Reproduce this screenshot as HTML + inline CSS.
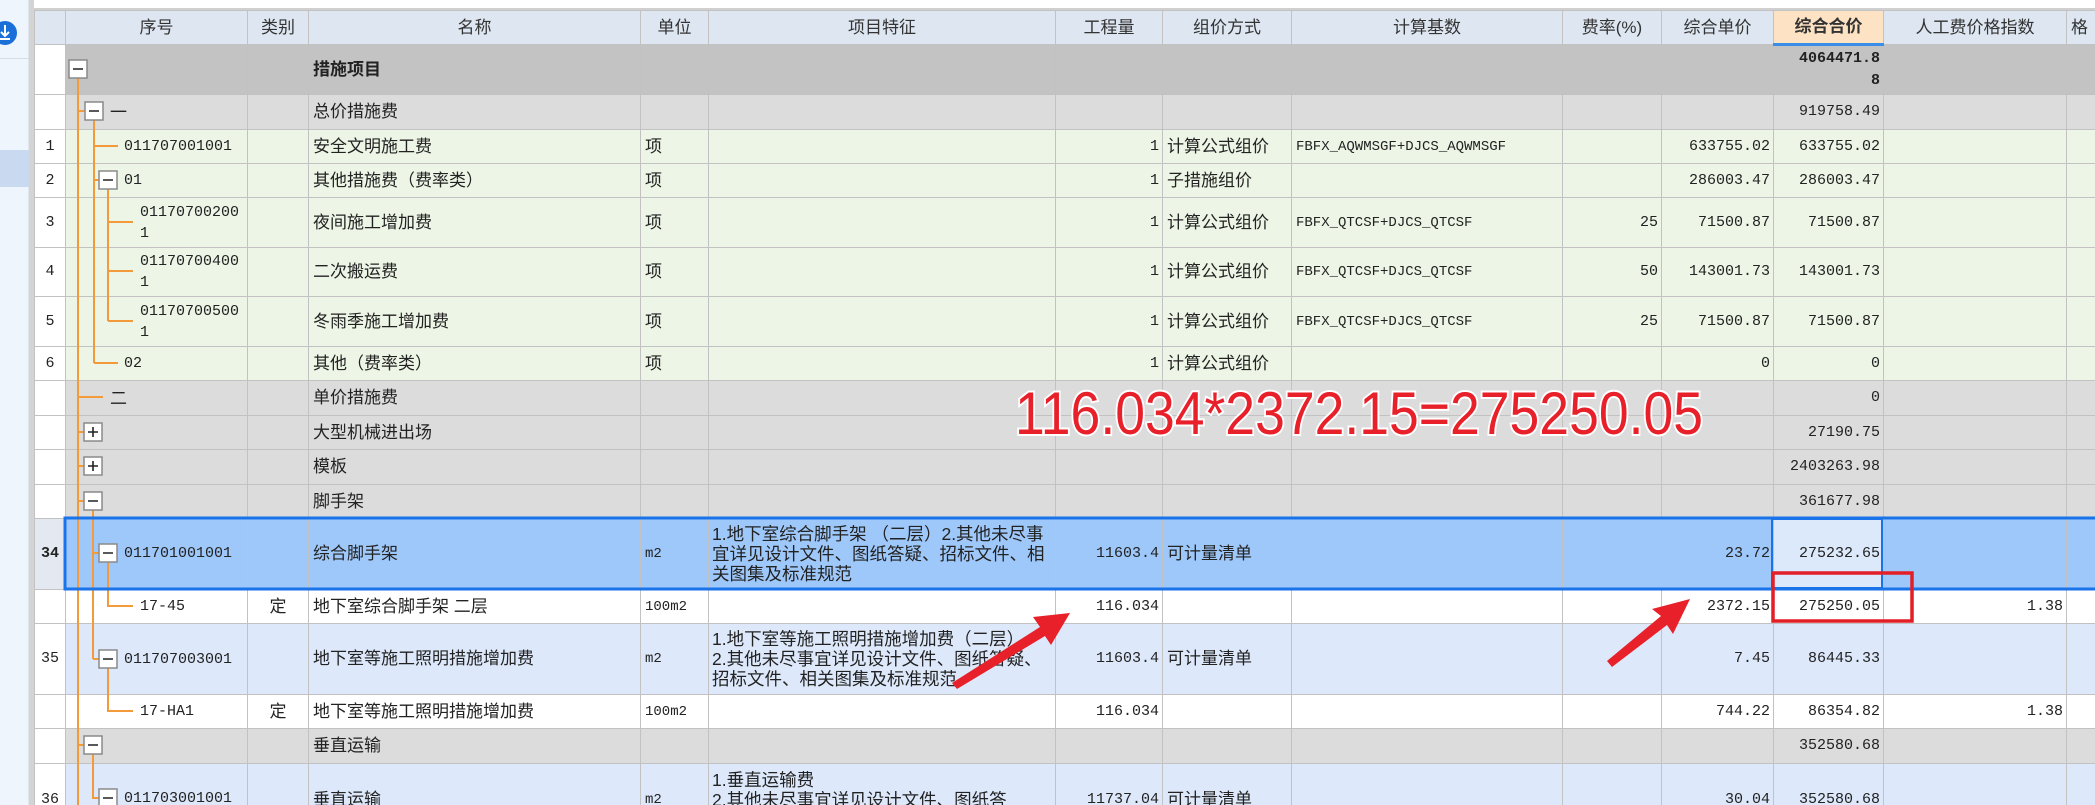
<!DOCTYPE html>
<html style="width:2095px;height:805px;overflow:hidden"><head><meta charset="utf-8">
<style>
*{margin:0;padding:0;box-sizing:border-box}
body{width:2095px;height:805px;overflow:hidden;background:#fff;position:relative;font-family:"Liberation Sans","Noto Sans CJK SC",sans-serif;color:#222}
#side{position:absolute;left:0;top:0;width:29px;height:805px;background:#eef5fc;border-right:1px solid #dfe6ee}
#gut{position:absolute;left:29px;top:0;width:5px;height:805px;background:#d4d4d4}
#topstrip{position:absolute;left:34px;top:0;width:2061px;height:10px;background:#fff;border-bottom:2px solid #d0d0d0}
table{position:absolute;left:34px;top:10px;border-collapse:collapse;table-layout:fixed;width:2100px}
td{border:1px solid #c2c2c2;font-size:17px;padding:0 4px;overflow:hidden;white-space:nowrap;vertical-align:middle;font-family:"Liberation Sans","Noto Sans CJK SC",sans-serif;line-height:20px}
tr.h td{background:#dde6f1;text-align:center;color:#333;height:34px}
td.n{text-align:right;font-family:"Liberation Mono","Noto Sans CJK SC",monospace;font-size:15px;padding-right:3px}
td.m{font-family:"Liberation Mono",monospace;font-size:14px}
td.rn{background:#fff;text-align:center;font-family:"Liberation Mono",monospace;font-size:15px;padding:0}
tr.g0 td{background:#c3c3c3}
tr.g1 td{background:#dcdcdc}
tr.gr td{background:#edf6e6}
tr.sel td{background:#9fc8fa}
tr.lb td{background:#dde9fb}
tr.w td{background:#fff}
tr td.rn{background:#fff}
td.f{white-space:normal;font-size:17.5px;line-height:20px;padding:0 3px;word-break:break-all}
.t{position:absolute;font-family:"Liberation Mono",monospace;font-size:15px;line-height:20px;height:20px}
</style></head><body>
<div id="side">
<svg width="29" height="805" style="position:absolute;left:0;top:0">
<rect x="0" y="58" width="29" height="1" fill="#d6dde6"/>
<rect x="0" y="150" width="29" height="37" fill="#c9d9f0"/>
<circle cx="5" cy="33" r="12" fill="#1a6fd8"/>
<path d="M5 25v11M1 32l4 4 4-4M0 39h10" stroke="#fff" stroke-width="2" fill="none"/>
</svg>
</div>
<div id="gut"></div>
<div id="topstrip"></div>
<table>
<colgroup><col style="width:31px"><col style="width:182px"><col style="width:61px"><col style="width:332px"><col style="width:68px"><col style="width:347px"><col style="width:107px"><col style="width:129px"><col style="width:271px"><col style="width:99px"><col style="width:112px"><col style="width:110px"><col style="width:183px"><col style="width:68px"></colgroup>
<tr class="h"><td></td><td>序号</td><td>类别</td><td>名称</td><td>单位</td><td>项目特征</td><td>工程量</td><td>组价方式</td><td>计算基数</td><td>费率(%)</td><td>综合单价</td><td style="background:#fde3c4;font-weight:bold;border-bottom:3px solid #3b8ee8">综合合价</td><td>人工费价格指数</td><td style="text-align:left">格</td></tr>
<tr class="g0" style="height:50px"><td class="rn"></td><td></td><td></td><td style="font-weight:bold">措施项目</td><td></td><td></td><td></td><td></td><td></td><td></td><td></td><td class="n" style="font-weight:bold;line-height:22px;white-space:normal">4064471.8<br>8</td><td></td><td></td></tr>
<tr class="g1" style="height:35px"><td class="rn"></td><td></td><td></td><td>总价措施费</td><td></td><td></td><td></td><td></td><td></td><td></td><td></td><td class="n">919758.49</td><td></td><td></td></tr>
<tr class="gr" style="height:34px"><td class="rn">1</td><td></td><td></td><td>安全文明施工费</td><td>项</td><td></td><td class="n">1</td><td>计算公式组价</td><td class="m">FBFX_AQWMSGF+DJCS_AQWMSGF</td><td></td><td class="n">633755.02</td><td class="n">633755.02</td><td></td><td></td></tr>
<tr class="gr" style="height:34px"><td class="rn">2</td><td></td><td></td><td>其他措施费（费率类）</td><td>项</td><td></td><td class="n">1</td><td>子措施组价</td><td></td><td></td><td class="n">286003.47</td><td class="n">286003.47</td><td></td><td></td></tr>
<tr class="gr" style="height:50px"><td class="rn">3</td><td></td><td></td><td>夜间施工增加费</td><td>项</td><td></td><td class="n">1</td><td>计算公式组价</td><td class="m">FBFX_QTCSF+DJCS_QTCSF</td><td class="n">25</td><td class="n">71500.87</td><td class="n">71500.87</td><td></td><td></td></tr>
<tr class="gr" style="height:49px"><td class="rn">4</td><td></td><td></td><td>二次搬运费</td><td>项</td><td></td><td class="n">1</td><td>计算公式组价</td><td class="m">FBFX_QTCSF+DJCS_QTCSF</td><td class="n">50</td><td class="n">143001.73</td><td class="n">143001.73</td><td></td><td></td></tr>
<tr class="gr" style="height:50px"><td class="rn">5</td><td></td><td></td><td>冬雨季施工增加费</td><td>项</td><td></td><td class="n">1</td><td>计算公式组价</td><td class="m">FBFX_QTCSF+DJCS_QTCSF</td><td class="n">25</td><td class="n">71500.87</td><td class="n">71500.87</td><td></td><td></td></tr>
<tr class="gr" style="height:34px"><td class="rn">6</td><td></td><td></td><td>其他（费率类）</td><td>项</td><td></td><td class="n">1</td><td>计算公式组价</td><td></td><td></td><td class="n">0</td><td class="n">0</td><td></td><td></td></tr>
<tr class="g1" style="height:35px"><td class="rn"></td><td></td><td></td><td>单价措施费</td><td></td><td></td><td></td><td></td><td></td><td></td><td></td><td class="n">0</td><td></td><td></td></tr>
<tr class="g1" style="height:34px"><td class="rn"></td><td></td><td></td><td>大型机械进出场</td><td></td><td></td><td></td><td></td><td></td><td></td><td></td><td class="n">27190.75</td><td></td><td></td></tr>
<tr class="g1" style="height:35px"><td class="rn"></td><td></td><td></td><td>模板</td><td></td><td></td><td></td><td></td><td></td><td></td><td></td><td class="n">2403263.98</td><td></td><td></td></tr>
<tr class="g1" style="height:34px"><td class="rn"></td><td></td><td></td><td>脚手架</td><td></td><td></td><td></td><td></td><td></td><td></td><td></td><td class="n">361677.98</td><td></td><td></td></tr>
<tr class="sel" style="height:71px"><td class="rn" style="background:#e4e8f0;font-weight:bold">34</td><td></td><td></td><td>综合脚手架</td><td class="m">m2</td><td class="f">1.地下室综合脚手架 （二层）2.其他未尽事宜详见设计文件、图纸答疑、招标文件、相关图集及标准规范</td><td class="n">11603.4</td><td>可计量清单</td><td></td><td></td><td class="n">23.72</td><td class="n" style="background:#dce9fb">275232.65</td><td></td><td></td></tr>
<tr class="w" style="height:34px"><td class="rn"></td><td></td><td style="text-align:center">定</td><td>地下室综合脚手架 二层</td><td class="m">100m2</td><td></td><td class="n">116.034</td><td></td><td></td><td></td><td class="n">2372.15</td><td class="n">275250.05</td><td class="n">1.38</td><td></td></tr>
<tr class="lb" style="height:71px"><td class="rn">35</td><td></td><td></td><td>地下室等施工照明措施增加费</td><td class="m">m2</td><td class="f">1.地下室等施工照明措施增加费（二层）<br>2.其他未尽事宜详见设计文件、图纸答疑、招标文件、相关图集及标准规范</td><td class="n">11603.4</td><td>可计量清单</td><td></td><td></td><td class="n">7.45</td><td class="n">86445.33</td><td></td><td></td></tr>
<tr class="w" style="height:34px"><td class="rn"></td><td></td><td style="text-align:center">定</td><td>地下室等施工照明措施增加费</td><td class="m">100m2</td><td></td><td class="n">116.034</td><td></td><td></td><td></td><td class="n">744.22</td><td class="n">86354.82</td><td class="n">1.38</td><td></td></tr>
<tr class="g1" style="height:35px"><td class="rn"></td><td></td><td></td><td>垂直运输</td><td></td><td></td><td></td><td></td><td></td><td></td><td></td><td class="n">352580.68</td><td></td><td></td></tr>
<tr class="lb" style="height:72px"><td class="rn">36</td><td></td><td></td><td>垂直运输</td><td class="m">m2</td><td class="f">1.垂直运输费<br>2.其他未尽事宜详见设计文件、图纸答<br>疑、招标文件</td><td class="n">11737.04</td><td>可计量清单</td><td></td><td></td><td class="n">30.04</td><td class="n">352580.68</td><td></td><td></td></tr>
</table>

<svg width="2095" height="805" style="position:absolute;left:0;top:0">
<g stroke="#f39a3a" stroke-width="2" fill="none">
<path d="M78 77V805M78 111H86M78 432H86M78 466H86M78 501H86M78 745H86M78 397H103"/>
<path d="M94 119V363M94 146H118M94 180H100M94 363H118"/>
<path d="M108 189V321M108 222H133M108 271H133M108 321H133"/>
<path d="M93 510V659M93 553H100M93 659H100"/>
<path d="M108 562V606H133M108 668V711H133"/>
<path d="M93 754V798H100"/>
</g>
<g fill="#fff" stroke="#8a8a8a" stroke-width="1.5">
<rect x="69" y="60" width="18" height="18"/>
<rect x="85" y="102" width="18" height="18"/>
<rect x="99" y="171" width="18" height="18"/>
<rect x="84" y="423" width="18" height="18"/>
<rect x="84" y="457" width="18" height="18"/>
<rect x="84" y="492" width="18" height="18"/>
<rect x="99" y="544" width="18" height="18"/>
<rect x="99" y="650" width="18" height="18"/>
<rect x="84" y="736" width="18" height="18"/>
<rect x="99" y="789" width="18" height="18"/>
</g>
<g stroke="#222" stroke-width="1.6">
<path d="M73 69h10M89 111h10M103 180h10M88 432h10M93 427v10M88 466h10M93 461v10M88 501h10M103 553h10M103 659h10M88 745h10M103 798h10"/>
</g>
<rect x="65" y="518" width="2040" height="71" fill="none" stroke="#1a73e8" stroke-width="3"/>
<rect x="1772" y="519" width="110" height="69" fill="none" stroke="#1a73e8" stroke-width="2"/>
<rect x="1773" y="573" width="139" height="48" fill="none" stroke="#e21f26" stroke-width="3.5"/>
<text x="1015" y="434" font-family="Liberation Sans Narrow,Liberation Sans,sans-serif" font-size="60" fill="#e8202a" stroke="#fff" stroke-width="4" paint-order="stroke" textLength="688" lengthAdjust="spacingAndGlyphs">116.034*2372.15=275250.05</text>
<polygon points="952,683 1040,627 1033,617 1070,613 1051,645 1045,636 957,689" fill="#e8202a"/>
<polygon points="1607,661 1661,616 1652,609 1690,599 1673,634 1667,625 1612,667" fill="#e8202a"/>
</svg>

<div class="t" style="left:110px;top:101px;font-family:'Noto Sans CJK SC',sans-serif;font-size:17px">一</div>
<div class="t" style="left:124px;top:137px">011707001001</div>
<div class="t" style="left:124px;top:171px">01</div>
<div class="t" style="left:140px;top:202px;line-height:21px;height:42px">01170700200<br>1</div>
<div class="t" style="left:140px;top:251px;line-height:21px;height:42px">01170700400<br>1</div>
<div class="t" style="left:140px;top:301px;line-height:21px;height:42px">01170700500<br>1</div>
<div class="t" style="left:124px;top:354px">02</div>
<div class="t" style="left:110px;top:387px;font-family:'Noto Sans CJK SC',sans-serif;font-size:17px">二</div>
<div class="t" style="left:124px;top:544px">011701001001</div>
<div class="t" style="left:140px;top:597px">17-45</div>
<div class="t" style="left:124px;top:650px">011707003001</div>
<div class="t" style="left:140px;top:702px">17-HA1</div>
<div class="t" style="left:124px;top:789px">011703001001</div>
</body></html>
